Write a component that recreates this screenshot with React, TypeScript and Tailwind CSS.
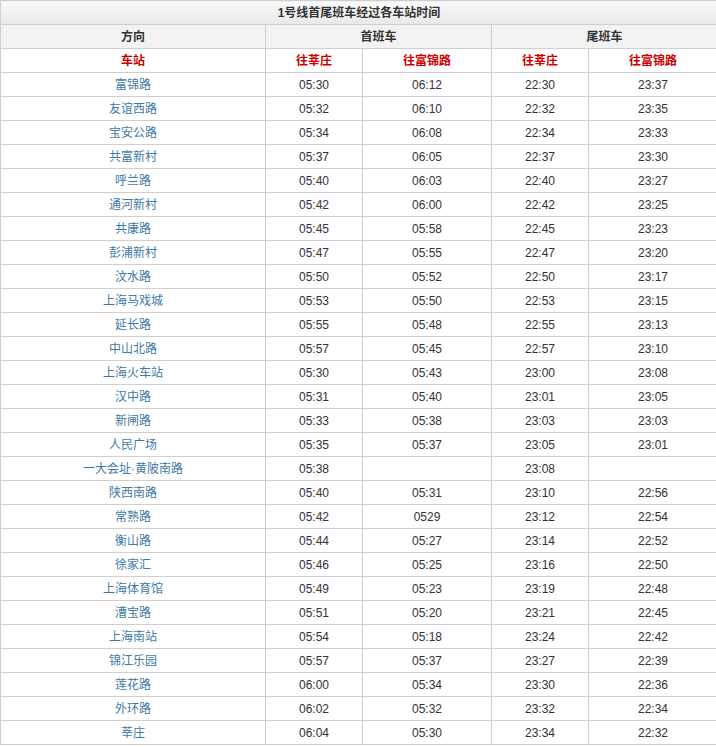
const rows: [string, string, string, string, string][] = [
["富锦路","05:30","06:12","22:30","23:37"],
["友谊西路","05:32","06:10","22:32","23:35"],
["宝安公路","05:34","06:08","22:34","23:33"],
["共富新村","05:37","06:05","22:37","23:30"],
["呼兰路","05:40","06:03","22:40","23:27"],
["通河新村","05:42","06:00","22:42","23:25"],
["共康路","05:45","05:58","22:45","23:23"],
["彭浦新村","05:47","05:55","22:47","23:20"],
["汶水路","05:50","05:52","22:50","23:17"],
["上海马戏城","05:53","05:50","22:53","23:15"],
["延长路","05:55","05:48","22:55","23:13"],
["中山北路","05:57","05:45","22:57","23:10"],
["上海火车站","05:30","05:43","23:00","23:08"],
["汉中路","05:31","05:40","23:01","23:05"],
["新闸路","05:33","05:38","23:03","23:03"],
["人民广场","05:35","05:37","23:05","23:01"],
["一大会址·黄陂南路","05:38","","23:08",""],
["陕西南路","05:40","05:31","23:10","22:56"],
["常熟路","05:42","0529","23:12","22:54"],
["衡山路","05:44","05:27","23:14","22:52"],
["徐家汇","05:46","05:25","23:16","22:50"],
["上海体育馆","05:49","05:23","23:19","22:48"],
["漕宝路","05:51","05:20","23:21","22:45"],
["上海南站","05:54","05:18","23:24","22:42"],
["锦江乐园","05:57","05:37","23:27","22:39"],
["莲花路","06:00","05:34","23:30","22:36"],
["外环路","06:02","05:32","23:32","22:34"],
["莘庄","06:04","05:30","23:34","22:32"],
];
const td = "border border-[#cfcfcf] h-[24px] p-0 text-center";
export default function App() {
  return (
    <div className="w-[716px] h-[747px] bg-white overflow-hidden" style={{fontFamily: '"Liberation Sans", "Noto Sans CJK SC", sans-serif'}}>
      <table className="w-[717px] border-collapse table-fixed text-[12px] text-[#333]">
        <colgroup>
          <col className="w-[265px]" /><col className="w-[97px]" /><col className="w-[129px]" /><col className="w-[97px]" /><col className="w-[129px]" />
        </colgroup>
        <tbody>
          <tr><td colSpan={5} className={td + " h-[24px] font-bold text-[#333] bg-gradient-to-b from-[#fafafa] to-[#e8e8e8]"}>1号线首尾班车经过各车站时间</td></tr>
          <tr className="bg-[#f2f2f2] font-bold">
            <td className={td}>方向</td>
            <td colSpan={2} className={td}>首班车</td>
            <td colSpan={2} className={td}>尾班车</td>
          </tr>
          <tr className="font-bold text-[#cc0000]">
            <td className={td}>车站</td><td className={td}>往莘庄</td><td className={td}>往富锦路</td><td className={td}>往莘庄</td><td className={td}>往富锦路</td>
          </tr>
          {rows.map((r) => (
            <tr key={r[0]}>
              <td className={td + " text-[#3f7aa6]"}>{r[0]}</td>
              <td className={td}>{r[1]}</td><td className={td}>{r[2]}</td><td className={td}>{r[3]}</td><td className={td}>{r[4]}</td>
            </tr>
          ))}
        </tbody>
      </table>
    </div>
  );
}
